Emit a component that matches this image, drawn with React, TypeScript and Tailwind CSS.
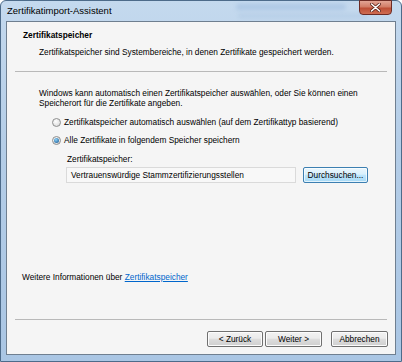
import React from "react";

const font = { fontFamily: '"Liberation Sans", Arial, sans-serif' };

function WinButton({ label, focused = false }: { label: string; focused?: boolean }) {
  return (
    <button
      className={`flex h-[16px] w-full items-center justify-center rounded-[2px] border text-[8.3px] leading-[10px] text-black ${
        focused
          ? "border-[#3c7fb1] bg-[linear-gradient(#eaf6fd_0%,#d9f0fc_45%,#bee6fd_50%,#a7d9f5_100%)] shadow-[inset_0_0_0_1px_#ffffffaa]"
          : "border-[#707070] bg-[linear-gradient(#f2f2f2_0%,#ebebeb_45%,#dddddd_50%,#cfcfcf_100%)] shadow-[inset_0_0_0_1px_#fcfcfc]"
      }`}
      style={font}
    >
      {label}
    </button>
  );
}

function Radio({ checked }: { checked?: boolean }) {
  return (
    <span className="flex h-[9px] w-[9px] shrink-0 items-center justify-center rounded-full border border-[#8e8f8f] bg-[radial-gradient(circle_at_40%_35%,#ffffff,#d4d4d4)]">
      {checked && (
        <span className="h-[5px] w-[5px] rounded-full bg-[radial-gradient(circle_at_40%_35%,#8fd2f8,#0d4f8b)]" />
      )}
    </span>
  );
}

export default function App() {
  return (
    <div
      className="flex h-[362px] w-[402px] flex-col rounded-t-[6px] border border-[#4d6b8a] bg-[linear-gradient(180deg,#c4d9ee_0%,#b4cde7_40%,#aac6e4_100%)] px-[5px] pb-[6px]"
      style={font}
    >
      {/* Title bar */}
      <div className="relative flex h-[20px] shrink-0 items-center">
        <span className="pl-[1px] text-[9.5px] text-black">Zertifikatimport-Assistent</span>
        <div className="absolute left-[230px] top-[3px] h-[6px] w-[110px] rounded-full bg-[#8fb0d8] opacity-40 blur-[2px]" />
        <div className="absolute left-[232px] top-[13px] h-[4px] w-[130px] rounded-full bg-[#9ab6d6] opacity-30 blur-[2px]" />
        <div className="absolute right-[4px] top-[-1px] flex h-[15px] w-[33px] items-center justify-center rounded-b-[4px] border border-[#6d2b24] bg-[linear-gradient(#e3a595_0%,#d27d67_45%,#bd4f36_55%,#cf6d52_100%)]">
          <svg width="11" height="9" viewBox="0 0 11 9">
            <path d="M1.5 1 L9.5 8 M9.5 1 L1.5 8" stroke="#5b2219" strokeWidth="3" strokeLinecap="round" />
            <path d="M1.5 1 L9.5 8 M9.5 1 L1.5 8" stroke="#ffffff" strokeWidth="1.6" strokeLinecap="round" />
          </svg>
        </div>
      </div>

      {/* Client area */}
      <div className="flex flex-1 flex-col border border-[#6f7f90] bg-[#f5f5f5] text-[8.3px] leading-[10px] text-black">
        {/* Header */}
        <div className="flex flex-col px-[16px] pt-[8px]">
          <div className="font-bold">Zertifikatspeicher</div>
          <div className="mt-[7px] pl-[16px]">
            Zertifikatspeicher sind Systembereiche, in denen Zertifikate gespeichert werden.
          </div>
        </div>
        <div className="mx-[8px] mt-[14px] h-px bg-[#b9b9b9]" />

        {/* Body */}
        <div className="flex flex-col pl-[32px] pt-[16px]">
          <div>
            Windows kann automatisch einen Zertifikatspeicher auswählen, oder Sie können einen
            <br />
            Speicherort für die Zertifikate angeben.
          </div>
          <div className="mt-[9px] flex h-[10px] items-center gap-[3px] pl-[13px]">
            <Radio />
            <span>Zertifikatspeicher automatisch auswählen (auf dem Zertifikattyp basierend)</span>
          </div>
          <div className="mt-[8px] flex h-[10px] items-center gap-[3px] pl-[13px]">
            <Radio checked />
            <span>Alle Zertifikate in folgendem Speicher speichern</span>
          </div>
          <div className="mt-[9px] pl-[28px]">Zertifikatspeicher:</div>
          <div className="mt-[3px] flex items-center gap-[7px] pl-[27px]">
            <div className="flex h-[16px] w-[230px] items-center border border-[#dadada] bg-[#f8f8f8] pl-[4px]">
              Vertrauenswürdige Stammzertifizierungsstellen
            </div>
            <div className="w-[65px]">
              <WinButton label="Durchsuchen..." focused />
            </div>
          </div>
        </div>

        <div className="flex-1" />

        {/* Footer link */}
        <div className="pl-[15px]">
          Weitere Informationen über{" "}
          <span className="text-[#0066cc] underline">Zertifikatspeicher</span>
        </div>
        <div className="mx-[8px] mt-[37px] h-px bg-[#b9b9b9]" />

        {/* Buttons */}
        <div className="flex justify-end pb-[7px] pr-[7px] pt-[11px]">
          <div className="w-[56px]">
            <WinButton label="< Zurück" />
          </div>
          <div className="ml-[2px] w-[57px]">
            <WinButton label="Weiter >" />
          </div>
          <div className="ml-[9px] w-[57px]">
            <WinButton label="Abbrechen" />
          </div>
        </div>
      </div>
    </div>
  );
}
